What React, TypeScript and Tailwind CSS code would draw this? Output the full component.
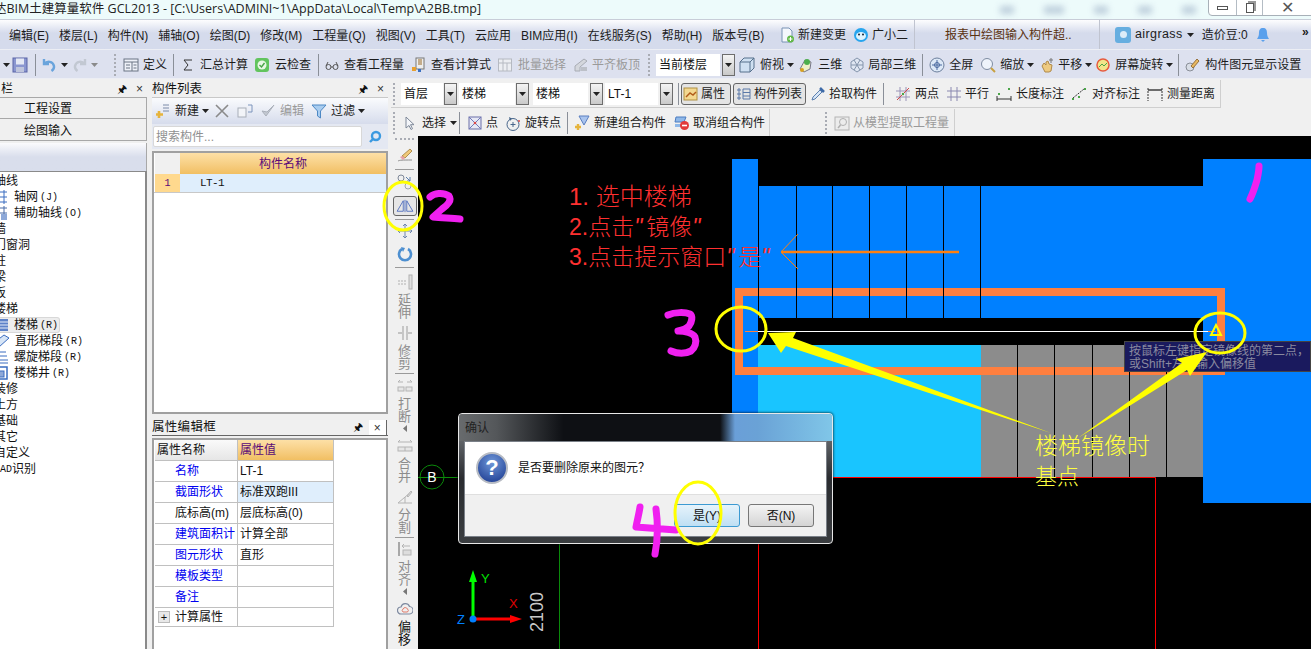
import type { ReactNode } from "react";

const Ic = ({ children, className = "" }: { children: ReactNode; className?: string }) => (
  <svg viewBox="0 0 16 16" className={`w-4 h-4 shrink-0 ${className}`} fill="none">
    {children}
  </svg>
);

const Caret = ({ className = "" }: { className?: string }) => (
  <svg viewBox="0 0 7 4" className={`w-[7px] h-1 shrink-0 ${className}`}>
    <path d="M0 0h7L3.5 4z" fill="#222" />
  </svg>
);

const Sep = ({ className = "" }: { className?: string }) => (
  <div className={`w-px h-[22px] bg-[#8a8f98] shrink-0 ${className}`} />
);

const Grip = ({ className = "" }: { className?: string }) => (
  <div className={`w-[2px] h-[22px] shrink-0 border-l-2 border-dotted border-[#a9acb4] ${className}`} />
);

const T = ({
  icon,
  label,
  className = "",
  gray = false,
}: {
  icon?: ReactNode;
  label: string;
  className?: string;
  gray?: boolean;
}) => (
  <div className={`flex items-center shrink-0 whitespace-nowrap ${gray ? "text-[#9a9a9a]" : "text-[#1c1c1c]"} ${className}`}>
    {icon}
    <span>{label}</span>
  </div>
);

const Dropdown = ({ className = "" }: { className?: string }) => (
  <div className={`w-[13px] h-[22px] shrink-0 flex items-center justify-center border border-[#6d6d6d] bg-gradient-to-b from-[#f4f4f4] to-[#c9c9c9] ${className}`}>
    <Caret />
  </div>
);

const Select = ({ label, className = "" }: { label: string; className?: string }) => (
  <div className={`h-[22px] shrink-0 bg-white pl-[3px] flex items-center text-[#111] ${className}`}>{label}</div>
);

// toolbar icons
const Save = () => (
  <Ic>
    <rect x="1" y="1" width="14" height="14" fill="#8a96d0" stroke="#5a64a6" />
    <rect x="4" y="1.500" width="8" height="6" fill="#e4e8f4" />
    <rect x="4" y="10" width="8" height="5" fill="#bfc5dc" />
  </Ic>
);
const Undo = ({ c = "#6aa4dc" }: { c?: string }) => (
  <Ic>
    <path d="M3 2v5h5M3.500 7C6 3.500 12 4 13 9c.3 2-1 4-2.500 5" stroke={c} strokeWidth="2.400" />
  </Ic>
);
const Redo = () => (
  <Ic>
    <path d="M13 2v5H8M12.500 7C10 3.500 4 4 3 9c-.3 2 1 4 2.500 5" stroke="#c2c8d2" strokeWidth="2.400" />
  </Ic>
);
const Define = () => (
  <Ic>
    <rect x="1" y="2" width="14" height="12" fill="#eef1f8" stroke="#6b7484" />
    <path d="M1 5h14M9 5v9M3 8h4M3 11h4M10.500 8h3M10.500 11h3" stroke="#6b7484" />
  </Ic>
);
const GreenCheck = () => (
  <Ic>
    <rect x="1" y="1" width="14" height="14" rx="3" fill="#62c45e" />
    <circle cx="8" cy="8" r="4.500" fill="#e9f8e6" />
    <path d="M5.500 8l2 2 3-4" stroke="#4aa548" strokeWidth="1.400" />
  </Ic>
);
const Glasses = () => (
  <Ic>
    <circle cx="4.500" cy="10" r="2.500" stroke="#555" />
    <circle cx="11.500" cy="10" r="2.500" stroke="#555" />
    <path d="M7 10h2M2 9l2-4M14 9l-2-4" stroke="#555" />
  </Ic>
);
const Calc = () => (
  <Ic>
    <rect x="5" y="1" width="8" height="11" fill="#eee" stroke="#777" />
    <path d="M7 3h4M7 5h4M7 7h4" stroke="#9a6a28" />
    <rect x="1" y="10" width="4" height="4" fill="#e8a030" />
    <rect x="7" y="12" width="3" height="3" fill="#3a70c0" />
  </Ic>
);
const GrayDoc = () => (
  <Ic>
    <rect x="1.500" y="2" width="13" height="12" fill="#eceef2" stroke="#b6bac2" />
    <path d="M1.500 6h13M6 2v12M10 6v8" stroke="#b6bac2" />
  </Ic>
);
const GrayBar = () => (
  <Ic>
    <path d="M2 14V9l9-7 3 2-7 6v4z" fill="#d4d7dd" stroke="#a8acb4" />
    <rect x="8" y="10" width="6" height="4" fill="#bcc0c8" />
  </Ic>
);
const Box3d = () => (
  <Ic>
    <path d="M1 5l4-4h10v10l-4 4H1z" fill="#cfe0f2" stroke="#56708c" />
    <path d="M1 5h10v10M11 5l4-4" stroke="#56708c" />
  </Ic>
);
const Globe3d = () => (
  <Ic>
    <path d="M2 12l5-9 6 2-1 7-6 3z" fill="#eef0c8" stroke="#778" />
    <circle cx="9" cy="5" r="3" fill="#4cae4c" />
    <circle cx="4" cy="13" r="2" fill="#d8a020" />
  </Ic>
);
const Cube = () => (
  <Ic>
    <path d="M8 1l6 4v6l-6 4-6-4V5z" fill="#dfe6f2" stroke="#8595ac" />
    <path d="M5 3l6 10M11 3L5 13M2 8h12" stroke="#8595ac" />
  </Ic>
);
const Target = () => (
  <Ic>
    <circle cx="8" cy="8" r="7" fill="#dce8f6" stroke="#6c7f9c" />
    <path d="M8 3v10M3 8h10" stroke="#4b6aa0" />
    <circle cx="8" cy="8" r="2.500" stroke="#4b6aa0" />
  </Ic>
);
const Magnifier = () => (
  <Ic>
    <circle cx="7" cy="7" r="5.500" fill="#eef3fb" stroke="#7e8ca2" />
    <path d="M11 11l4 4" stroke="#c8a040" strokeWidth="2" />
  </Ic>
);
const Hand = () => (
  <Ic>
    <path d="M3 9l2-3 2 2V5l2-1 1 3 3 1-1 6-2 1H6z" fill="#eeca80" stroke="#b08a4a" />
    <path d="M12 1v5M10 3h4" stroke="#777" />
  </Ic>
);
const Rotate = () => (
  <Ic>
    <path d="M3 3h10v10H3z" fill="#f2e58a" />
    <circle cx="8" cy="8" r="6" stroke="#e85a3a" strokeWidth="1.500" />
    <path d="M4 10l3-3 2 2 3-3" stroke="#4aa548" />
  </Ic>
);
const Paint = () => (
  <Ic>
    <circle cx="5" cy="10" r="4" fill="#d8dde6" stroke="#8a8f98" />
    <path d="M6 9l6-7 2 2-6 7z" fill="#e8b860" stroke="#96703a" />
  </Ic>
);
const NewDoc = () => (
  <Ic>
    <path d="M3 1h7l3 3v11H3z" fill="#f4f7fc" stroke="#7892b4" />
    <circle cx="11.500" cy="12" r="3.500" fill="#62b848" />
    <path d="M11.500 10v4M9.500 12h4" stroke="#fff" />
  </Ic>
);
const Mascot = () => (
  <Ic>
    <circle cx="8" cy="8" r="7" fill="#27a5ee" />
    <ellipse cx="8" cy="9" rx="5" ry="4" fill="#dff4ff" />
    <circle cx="6" cy="7.500" r="1" fill="#123" />
    <circle cx="10" cy="7.500" r="1" fill="#123" />
  </Ic>
);
const Plus = () => (
  <Ic>
    <path d="M8 2h6M8 5h6M8 8h6" stroke="#7a8aa8" />
    <path d="M4 8v7M1 11.500h7" stroke="#e6b43c" strokeWidth="2.600" />
  </Ic>
);
const GrayCheck = () => (
  <Ic>
    <path d="M2 8l4 5 8-11-7 7z" fill="#c4c9d2" stroke="#aab0ba" />
  </Ic>
);
const Filter = () => (
  <Ic>
    <path d="M1 2h14L9.500 8v7l-3-2V8z" fill="#a9cdf0" stroke="#4d88c4" />
  </Ic>
);
const Copy = () => (
  <Ic>
    <rect x="1" y="5" width="8" height="9" fill="#f2f4f8" stroke="#a8aeb8" />
    <path d="M11 2h4v7h-4" stroke="#7d94bc" />
  </Ic>
);
const Dropper = () => (
  <Ic>
    <path d="M2 14l1-3 7-7 2 2-7 7z" fill="#d7e5f6" stroke="#5b7fae" />
    <path d="M10 2l4 4" stroke="#3d6aa8" strokeWidth="2.500" />
  </Ic>
);
const TwoPoint = () => (
  <Ic>
    <path d="M5 1v14M11 1v14M1 5h14M1 11h14" stroke="#9a94b8" />
    <path d="M2 14L14 2" stroke="#d04848" />
    <circle cx="8" cy="8" r="1.200" fill="#4aa548" />
  </Ic>
);
const Parallel = () => (
  <Ic>
    <path d="M5 1v14M11 1v14M1 5h14M1 11h14" stroke="#8a88b0" />
  </Ic>
);
const LengthDim = () => (
  <Ic>
    <path d="M1 10v5M15 10v5M1 13h14" stroke="#333" />
    <rect x="12" y="2" width="2" height="2" fill="#4aa548" />
    <rect x="2" y="7" width="2" height="2" fill="#4aa548" />
  </Ic>
);
const AlignDim = () => (
  <Ic>
    <path d="M2 12L13 3" stroke="#333" strokeDasharray="2 1" />
    <rect x="1" y="12" width="2" height="2" fill="#4aa548" />
    <rect x="7" y="10" width="2" height="2" fill="#4aa548" />
    <rect x="13" y="2" width="2" height="2" fill="#4aa548" />
  </Ic>
);
const Measure = () => (
  <Ic>
    <path d="M1 2v13M15 2v13" stroke="#333" strokeDasharray="2 1" />
    <path d="M1 4h14" stroke="#333" strokeWidth="1.400" />
  </Ic>
);
const Cursor = () => (
  <Ic>
    <path d="M5 2v11l3-2.500 2 4 1.500-.8-2-4h3.500z" fill="#f4f6fa" stroke="#7e8898" />
  </Ic>
);
const PointX = () => (
  <Ic>
    <rect x="2" y="2" width="12" height="12" fill="#e6e8f4" stroke="#6a6ea8" />
    <path d="M2 2l12 12M14 2L2 14" stroke="#7078b8" />
    <circle cx="8" cy="8" r="1.300" fill="#d84848" />
  </Ic>
);
const RotatePt = () => (
  <Ic>
    <circle cx="8" cy="9.500" r="6" stroke="#47658a" />
    <path d="M8 7v5M5.500 9.500h5" stroke="#47658a" />
    <path d="M4 2l3 1.500-2 2.500z" fill="#47658a" />
    <circle cx="14" cy="6" r="1" fill="#d84848" />
  </Ic>
);
const ComboNew = () => (
  <Ic>
    <path d="M5 1h10l-5 9z" fill="#a9c4ee" stroke="#5b7fc0" />
    <path d="M4 9v6M1 12h6" stroke="#e6b43c" strokeWidth="2.400" />
  </Ic>
);
const ComboCancel = () => (
  <Ic>
    <path d="M2 2h10l-2 5H1z" fill="#8fb8e8" stroke="#4d7cc0" />
    <rect x="1" y="9" width="7" height="3" fill="#8fb8e8" />
    <circle cx="10.500" cy="10.500" r="4.500" fill="#e23a3a" />
    <path d="M8 10.500h5" stroke="#fff" strokeWidth="1.600" />
  </Ic>
);
const ModelPick = () => (
  <Ic>
    <rect x="1" y="2" width="14" height="13" fill="#ececec" stroke="#b4b4b4" />
    <circle cx="9" cy="7" r="3.500" stroke="#b0b0b0" />
    <path d="M6.500 10L4 13" stroke="#b0b0b0" strokeWidth="1.500" />
  </Ic>
);
const PropIcon = () => (
  <Ic>
    <rect x="1" y="2" width="13" height="12" fill="#f3d890" stroke="#b09040" />
    <path d="M3 11l4-4 3 2 3-3" stroke="#b05a18" strokeWidth="1.400" />
  </Ic>
);
const ListIcon = () => (
  <Ic>
    <path d="M2 3h2v2H2zM2 7h2v2H2zM2 11h2v2H2z" stroke="#5b79a8" />
    <path d="M7 3h7v10H7zM7 6.500h7M7 10h7" stroke="#5b79a8" />
  </Ic>
);

// vertical strip
const VText = ({ a, b, dark = false }: { a: string; b: string; dark?: boolean }) => (
  <div className={`flex flex-col items-center text-[13px] leading-[13px] ${dark ? "text-[#111]" : "text-[#8c8c8c]"}`}>
    <span>{a}</span>
    <span>{b}</span>
  </div>
);
const VSep = ({ className = "" }: { className?: string }) => (
  <div className={`w-[19px] h-px bg-[#9a9a9a] shrink-0 ${className}`} />
);
const VTiny = ({ className = "" }: { className?: string }) => (
  <svg viewBox="0 0 4 7" className={`w-1 h-[7px] shrink-0 ${className}`}>
    <path d="M4 0v7L0 3.500z" fill="#777" />
  </svg>
);

const VerticalStrip = () => (
  <div className="w-[27px] h-full shrink-0 flex flex-col items-center bg-[#f0f0f0] overflow-hidden">
    <div className="w-[19px] h-[2px] mt-[2px] shrink-0 border-t-2 border-dotted border-[#a9acb4]" />
    <Ic className="mt-[7px]">
      <path d="M1 14c2-1 4-1 14-1" stroke="#8e8e8e" />
      <path d="M5 9l8-7 2 2-7 7z" fill="#f0c878" stroke="#b09050" />
      <path d="M3 10l2-1 3 2-2 2z" fill="#e8a0a8" />
    </Ic>
    <VSep className="mt-[6px]" />
    <Ic className="mt-[4px]">
      <circle cx="4" cy="4" r="3" stroke="#7e8898" />
      <circle cx="11" cy="12" r="3" stroke="#9ca4b0" />
      <path d="M9 3l4 4M13 3v4h-3" stroke="#5b7fae" />
    </Ic>
    <div className="mt-[6px] w-[24px] h-[20px] shrink-0 rounded-[3px] border border-[#666] bg-[#e6e6e6] flex items-center justify-center">
      <svg viewBox="0 0 20 16" className="w-[18px] h-[14px]" fill="none">
        <path d="M8 2v12H1zM12 2v12h7zM10 1v14" stroke="#3a5cb8" strokeWidth=".9" />
      </svg>
    </div>
    <VSep className="mt-[3px]" />
    <Ic className="mt-[3px]">
      <path d="M8 1v14M1 8h14M6 3l2-2 2 2M6 13l2 2 2-2M3 6L1 8l2 2M13 6l2 2-2 2" stroke="#6f86ad" />
    </Ic>
    <Ic className="mt-[7px]">
      <path d="M11 3a6 6 0 1 1-6 0" stroke="#4d8fd0" strokeWidth="2.600" />
      <path d="M4 1l4 1-2 4z" fill="#4d8fd0" />
    </Ic>
    <VSep className="mt-[5px]" />
    <Ic className="mt-[6px]">
      <path d="M1 7h9M1 10h9" stroke="#b0b0b0" strokeDasharray="2 1" />
      <rect x="12" y="1" width="3" height="14" fill="#e0e0e0" stroke="#b0b0b0" />
    </Ic>
    <div className="mt-[3px]">
      <VText a="延" b="伸" />
    </div>
    <Ic className="mt-[6px]">
      <path d="M6 1v14M10 1v14M1 8h4M11 8h4" stroke="#b4b4b4" strokeWidth="1.400" />
    </Ic>
    <div className="mt-[3px]">
      <VText a="修" b="剪" />
    </div>
    <VSep className="mt-[3px]" />
    <Ic className="mt-[4px]">
      <path d="M1 4h5M10 4h5M1 4l2-2M15 4l-2-2" stroke="#b4b4b4" />
      <rect x="1" y="9" width="6" height="4" fill="#e6e6e6" stroke="#b4b4b4" />
      <rect x="9" y="9" width="6" height="4" fill="#e6e6e6" stroke="#b4b4b4" />
    </Ic>
    <div className="mt-[3px]">
      <VText a="打" b="断" />
    </div>
    <VTiny className="mt-[2px]" />
    <Ic className="mt-[6px]">
      <path d="M1 4h14M1 4l2-2M15 4l-2-2" stroke="#b4b4b4" />
      <rect x="1" y="9" width="14" height="4" fill="#e6e6e6" stroke="#b4b4b4" />
      <path d="M8 9v4" stroke="#b4b4b4" />
    </Ic>
    <div className="mt-[3px]">
      <VText a="合" b="并" />
    </div>
    <Ic className="mt-[6px]">
      <path d="M1 14L14 3M1 14h14M8 8v6" stroke="#b4b4b4" />
      <path d="M10 7l4-5 1 1-4 5z" fill="#ddd" stroke="#b4b4b4" />
    </Ic>
    <div className="mt-[3px]">
      <VText a="分" b="割" />
    </div>
    <VSep className="mt-[3px]" />
    <Ic className="mt-[3px]">
      <path d="M2 1v14" stroke="#a8a8a8" strokeWidth="2" />
      <rect x="6" y="9" width="8" height="5" fill="#ddd" stroke="#b4b4b4" />
      <path d="M5 5h8M5 5l2-2M5 5l2 2" stroke="#b4b4b4" />
    </Ic>
    <div className="mt-[3px]">
      <VText a="对" b="齐" />
    </div>
    <VTiny className="mt-[2px]" />
    <Ic className="mt-[6px]">
      <path d="M4 13a3.500 3.500 0 0 1 0-7 4.500 4.500 0 0 1 8.500-.5A3.700 3.700 0 0 1 12 13z" stroke="#7e8aa0" strokeWidth="1.200" />
      <path d="M6 11a2 2 0 0 1 0-3 2.500 2.500 0 0 1 4.500 0 2 2 0 0 1 0 3z" stroke="#e07a6a" />
    </Ic>
    <div className="mt-[3px]">
      <VText a="偏" b="移" dark />
    </div>
  </div>
);

const Paren = ({ children }: { children: ReactNode }) => (
  <span className="font-['Liberation_Mono',monospace] text-[10px] ml-[2px]">{children}</span>
);

const TreeRow = ({ children, className = "" }: { children: ReactNode; className?: string }) => (
  <div className={`h-4 flex items-center whitespace-nowrap text-[12px] text-[#111] ${className}`}>{children}</div>
);

const LeftNav = () => (
  <div className="w-[147px] h-full shrink-0 flex flex-col">
    <div className="h-[17px] flex items-center text-[12px] text-[#111] pl-[1px] pr-[4px] pt-[1px]">
      <span>栏</span>
      <span className="ml-auto text-[11px]">🖈</span>
      <span className="ml-[9px] text-[12px] leading-none text-[#333]">×</span>
    </div>
    <div className="h-[22px] border-y border-r border-[#a8a8a8] bg-[#f0f0f0] flex items-center pl-[24px] pt-[2px] text-[12px] text-[#111]">工程设置</div>
    <div className="h-[22px] border-b border-r border-[#a8a8a8] bg-[#f0f0f0] flex items-center pl-[24px] pt-[2px] text-[12px] text-[#111]">绘图输入</div>
    <div className="h-[28px] mt-[2px] border-r border-[#a8a8a8] bg-gradient-to-b from-[#fbfbfd] via-[#d9deec] to-[#d9deec]" />
    <div className="flex-1 bg-white border-t border-r-2 border-[#8a8a8a] pt-[1px] overflow-hidden">
      <TreeRow className="-ml-[6px]">轴线</TreeRow>
      <TreeRow>
        <Ic className="-ml-[7px] mr-[5px]">
          <path d="M2 3h12M2 8h12M2 13h12M5 1v14M11 1v14" stroke="#3a6cc0" />
        </Ic>
        轴网<Paren>(J)</Paren>
      </TreeRow>
      <TreeRow>
        <Ic className="-ml-[7px] mr-[5px]">
          <path d="M2 3h12M2 8h12M5 1v14M11 1v14" stroke="#4a6ca8" />
          <rect x="8" y="9" width="6" height="6" fill="#8da8d8" />
        </Ic>
        辅助轴线<Paren>(O)</Paren>
      </TreeRow>
      <TreeRow className="-ml-[6px]">墙</TreeRow>
      <TreeRow className="-ml-[6px]">门窗洞</TreeRow>
      <TreeRow className="-ml-[6px]">柱</TreeRow>
      <TreeRow className="-ml-[6px]">梁</TreeRow>
      <TreeRow className="-ml-[6px]">板</TreeRow>
      <TreeRow className="-ml-[6px]">楼梯</TreeRow>
      <TreeRow>
        <div className="h-4 flex items-center w-[60px] rounded-r-[3px] bg-[#ededed] border-y border-r border-[#d8d8d8]">
          <Ic className="-ml-[7px] mr-[5px]">
            <rect x="1" y="2" width="14" height="12" fill="#5d82c8" />
            <path d="M1 5h14M1 8h14M1 11h14" stroke="#e8eefa" />
          </Ic>
          楼梯<Paren>(R)</Paren>
        </div>
      </TreeRow>
      <TreeRow>
        <Ic className="-ml-[6px] mr-[5px]">
          <path d="M1 9l9-7 5 3-10 9z" fill="#d7e5f6" stroke="#3a6cc0" />
        </Ic>
        直形梯段<Paren>(R)</Paren>
      </TreeRow>
      <TreeRow>
        <Ic className="-ml-[7px] mr-[5px]">
          <path d="M3 3h10M1 7h13M3 11h12M1 14h14" stroke="#3a6cc0" />
        </Ic>
        螺旋梯段<Paren>(R)</Paren>
      </TreeRow>
      <TreeRow>
        <Ic className="-ml-[7px] mr-[5px]">
          <rect x="1" y="2" width="13" height="12" stroke="#3a6cc0" strokeWidth="1.500" />
          <rect x="5" y="6" width="6" height="6" fill="#8da8d8" stroke="#3a6cc0" />
        </Ic>
        楼梯井<Paren>(R)</Paren>
      </TreeRow>
      <TreeRow className="-ml-[6px]">装修</TreeRow>
      <TreeRow className="-ml-[6px]">土方</TreeRow>
      <TreeRow className="-ml-[6px]">基础</TreeRow>
      <TreeRow className="-ml-[6px]">其它</TreeRow>
      <TreeRow className="-ml-[6px]">自定义</TreeRow>
      <TreeRow>
        <span className="font-['Liberation_Mono',monospace] text-[10px]">AD</span>识别
      </TreeRow>
    </div>
  </div>
);

const ListPanel = () => (
  <div className="w-[236px] h-[334px] shrink-0 flex flex-col">
    <div className="h-[17px] flex items-center text-[12.500px] text-[#111] pr-[4px] pt-[1px]">
      <span>构件列表</span>
      <span className="ml-auto text-[11px]">🖈</span>
      <span className="ml-[9px] text-[12px] leading-none text-[#333]">×</span>
    </div>
    <div className="h-[27px] bg-gradient-to-b from-[#fafbfd] to-[#d6dcec] flex items-center text-[12px] border-t border-[#c8c8c8]">
      <T className="ml-[3px] gap-1" icon={<Plus />} label="新建" />
      <Caret className="ml-[3px]" />
      <svg viewBox="0 0 14 14" className="ml-[6px] w-[14px] h-[14px]" fill="none">
        <path d="M1 1l12 12M13 1L1 13" stroke="#8a8a8a" strokeWidth="1.600" />
      </svg>
      <div className="ml-[8px]">
        <Copy />
      </div>
      <T className="ml-[7px] gap-1" icon={<GrayCheck />} label="编辑" gray />
      <T className="ml-[7px] gap-1" icon={<Filter />} label="过滤" />
      <Caret className="ml-[3px]" />
    </div>
    <div className="h-[25px] bg-[#e4e8f2] flex items-center">
      <div className="w-[209px] h-[21px] ml-[1px] bg-white border border-[#d8d8d8] rounded-[2px] text-[12px] text-[#909090] flex items-center pl-[2px]">搜索构件...</div>
      <svg viewBox="0 0 14 14" className="ml-[6px] w-[14px] h-[14px]" fill="none">
        <circle cx="8" cy="6" r="4" stroke="#3c9ae0" strokeWidth="2.400" />
        <path d="M5 9l-3 3" stroke="#3c9ae0" strokeWidth="2.400" />
      </svg>
    </div>
    <div className="flex-1 mt-[2px] border-2 border-[#a0a0a0] bg-white text-[12px]">
      <div className="h-[21px] flex">
        <div className="w-[25px] ml-[1px] bg-[#f0f0f0]" />
        <div className="flex-1 bg-gradient-to-b from-[#fde0a6] to-[#f1bf62] flex items-center justify-center text-[#5a0a78]">构件名称</div>
      </div>
      <div className="h-[19px] flex border-b border-[#c8c8c8]">
        <div className="w-[25px] ml-[1px] bg-[#ffd98e] flex items-center justify-center text-[#5a0a78] font-['Liberation_Mono',monospace] text-[10px]">1</div>
        <div className="flex-1 bg-[#dfeefc] pl-[20px] flex items-center font-['Liberation_Mono',monospace] text-[11px] tracking-[-0.6px] text-[#111]">LT-1</div>
      </div>
    </div>
  </div>
);

const rows: { name: string; value: string; blue?: boolean; hi?: boolean }[] = [
  { name: "名称", value: "LT-1", blue: true },
  { name: "截面形状", value: "标准双跑III", blue: true, hi: true },
  { name: "底标高(m)", value: "层底标高(0)" },
  { name: "建筑面积计", value: "计算全部", blue: true },
  { name: "图元形状", value: "直形", blue: true },
  { name: "模板类型", value: "", blue: true },
  { name: "备注", value: "", blue: true },
];

const PropPanel = () => (
  <div className="w-[236px] flex-1 mt-[6px] flex flex-col">
    <div className="h-[16px] flex items-center text-[12.500px] tracking-[0.3px] text-[#111] border-b border-[#666] pr-[1px] bg-[#f0f0f0]">
      <span>属性编辑框</span>
      <span className="ml-auto text-[11px]">🖈</span>
      <div className="ml-[6px] w-[18px] h-[15px] flex items-center justify-center text-[12px] leading-none text-[#333] bg-white border-r border-[#666]">×</div>
    </div>
    <div className="flex-1 mt-[2px] border-x-2 border-t-2 border-[#a0a0a0] bg-white text-[12px] text-[#111]">
      <div className="w-[179px] ml-[1px] flex h-[21px] border-b border-[#c0c0c0]">
        <div className="w-[83px] bg-gradient-to-b from-[#fafafa] to-[#e6e6e6] flex items-center pl-[2px] border-r border-[#c0c0c0]">属性名称</div>
        <div className="flex-1 bg-gradient-to-b from-[#fde0a6] to-[#f1bf62] flex items-center pl-[2px] text-[#5a0a78] border-r border-[#c0c0c0]">属性值</div>
      </div>
      {rows.map((r) => (
        <div key={r.name} className="w-[179px] ml-[1px] flex h-[21px] border-b border-[#c0c0c0]">
          <div className={`w-[83px] flex items-center pl-[20px] whitespace-nowrap border-r border-[#c0c0c0] ${r.blue ? "text-[#0000f0]" : ""}`}>{r.name}</div>
          <div className={`flex-1 flex items-center pl-[2px] whitespace-nowrap border-r border-[#c0c0c0] ${r.hi ? "bg-[#dfeefc]" : ""}`}>{r.value}</div>
        </div>
      ))}
      <div className="w-[179px] ml-[1px] flex h-[19px] border-b border-[#c0c0c0]">
        <div className="w-[83px] flex items-center pl-[3px] whitespace-nowrap border-r border-[#c0c0c0]">
          <div className="w-3 h-3 bg-[#e8e8e8] border border-[#bbb] flex items-center justify-center text-[11px] leading-none">+</div>
          <span className="ml-[5px]">计算属性</span>
        </div>
        <div className="flex-1 border-r border-[#c0c0c0]" />
      </div>
    </div>
  </div>
);

const Dialog = () => (
  <div className="absolute left-[458px] top-[413px] w-[375px] h-[131px] rounded-[4px] border border-[#e8e8e8] overflow-hidden shadow-[0_0_3px_#000] flex flex-col text-[12px] bg-gradient-to-b from-[#8b9094] via-[#2a2c30] to-[#3a3d40] px-[5px] pb-[6px]">
    <div className="-mx-[5px] h-[27px] shrink-0 flex items-center pl-[6px] text-[#222] bg-[linear-gradient(90deg,#686b6d_0%,#54575a_10%,#0e1014_28%,#0e1014_70%,#6a9fd8_74%,#6aa2d6_80%,#80c6e8_100%)]">
      确认
    </div>
    <div className="flex-1 flex flex-col bg-white border border-[#7a8088]">
      <div className="h-[52px] flex items-center pl-[11px]">
        <div className="w-8 h-8 rounded-full border-2 border-[#b8bcc4] bg-[radial-gradient(circle_at_50%_30%,#6f97d8,#17358c)] flex items-center justify-center text-white font-bold text-[22px] leading-none">
          ?
        </div>
        <span className="ml-[10px] -mt-[3px] text-[#111] font-['Noto_Sans_CJK_SC',sans-serif]">是否要删除原来的图元？</span>
      </div>
      <div className="flex-1 bg-[#f0f0f0] border-t border-[#dfdfdf] flex items-start justify-end pt-[9px] pr-[12px] gap-[8px] text-[#111]">
        <div className="w-[66px] h-[23px] rounded-[3px] border border-[#3c9ad2] bg-gradient-to-b from-[#e6f3fb] to-[#bfdff3] flex items-center justify-center">是(Y)</div>
        <div className="w-[66px] h-[23px] rounded-[3px] border border-[#777] bg-gradient-to-b from-[#f4f4f4] to-[#d4d4d4] flex items-center justify-center">否(N)</div>
      </div>
    </div>
  </div>
);

const Canvas = () => (
  <div className="relative flex-1 h-full bg-black overflow-hidden">
    {/* coordinates inside the drawing, origin at 418,136 */}
    <div className="absolute left-[314px] top-[23px] w-[26px] h-[318px] bg-[#0080ff]" />
    <div className="absolute left-[340px] top-[50px] w-[445px] h-[132px] bg-[#0080ff]" />
    <div className="absolute left-[785px] top-[23px] w-[108px] h-[344px] bg-[#0080ff]" />
    <div className="absolute left-[340px] top-[209px] w-[223px] h-[132px] bg-[#19c5ff]" />
    <div className="absolute left-[563px] top-[209px] w-[222px] h-[132px] bg-[#8c8c8c]" />
    <div className="absolute left-[340px] top-[182px] w-[445px] h-[27px] bg-black" />
    <svg className="absolute inset-0 w-[893px] h-[513px]" viewBox="0 0 893 513" fill="none">
      <rect x="321" y="156" width="482" height="79" stroke="#ff7f3f" strokeWidth="8" />
      <path d="M340.500 50v132M378.500 50v132M414.500 50v132M451.500 50v132M488.500 50v132M525.500 50v132M562.500 50v132" stroke="#000" />
      <path d="M599.500 209v132M636.500 209v132M674.500 209v132M711.500 209v132M748.500 209v132" stroke="#000" />
      <path d="M340 195.500h450" stroke="#fff" />
      <path d="M327 195.500h13M790 195.500h8" stroke="#ff7f3f" />
      <path d="M414 341.500h323.500V513" stroke="#f00" />
      <path d="M340.500 405v108" stroke="#f00" />
      <path d="M141.500 405v108" stroke="#0a8a0a" />
      <path d="M0 341.500h40" stroke="#0a8a0a" />
      <circle cx="14" cy="341" r="12" stroke="#0a8a0a" />
      <text x="14" y="346" fill="#fff" textAnchor="middle" fontSize="14" fontFamily="Liberation Sans">B</text>
      <path d="M55 483V440" stroke="#00ff00" strokeWidth="3" />
      <path d="M55 434l-4 12h8z" fill="#00ff00" />
      <path d="M55 483h38" stroke="#ff0000" strokeWidth="3" />
      <path d="M104 483l-12-4v8z" fill="#ff0000" />
      <circle cx="55" cy="483" r="3.500" fill="#0080ff" />
      <text x="63" y="447" fill="#00e000" fontSize="13" fontFamily="Liberation Sans" fontWeight="300">Y</text>
      <text x="91" y="472" fill="#e00000" fontSize="13" fontFamily="Liberation Sans">X</text>
      <text x="39" y="488" fill="#0080ff" fontSize="13" fontFamily="Liberation Sans">Z</text>
      <text transform="translate(125 496) rotate(-90)" fill="#c8c8c8" fontSize="18" fontFamily="Liberation Sans">2100</text>
    </svg>
    <div className="absolute left-[706px] top-[205px] w-[187px] h-[31px] bg-[#1a1a5e] border border-[#444] text-[12px] leading-[13px] text-[#8a8aa0] pl-[4px] pt-[3px] whitespace-nowrap">
      <div>按鼠标左键指定镜像线的第二点，</div>
      <div>或Shift+左键输入偏移值</div>
    </div>
  </div>
);

const Q = () => <span className="tracking-[4px] italic">"</span>;

const Overlay = () => (
  <>
    <svg className="absolute inset-0 w-[1311px] h-[649px] pointer-events-none" viewBox="0 0 1311 649" fill="none">
      <ellipse cx="403" cy="206" rx="19" ry="24" stroke="#ffff00" strokeWidth="3" />
      <ellipse cx="741" cy="329" rx="25" ry="22" stroke="#ffff00" strokeWidth="3" />
      <ellipse cx="1220" cy="333" rx="25" ry="20" stroke="#ffff00" strokeWidth="3" />
      <path d="M1216 325l5 10h-10z" stroke="#ffff00" strokeWidth="2" />
      <path d="M781 252h178" stroke="#ff8010" strokeWidth="2.500" />
      <path d="M798 234l-17 18 17 17" stroke="#ff8010" />
      <path d="M768 333l28-1-3 6 258 95-265-87-5 7z" fill="#ffff00" />
      <path d="M1207 352l-17 24-3-6-109 68 104-75-6-4z" fill="#ffff00" />
      <g stroke="#f020f0" strokeWidth="7" strokeLinecap="round" strokeLinejoin="round">
        <path d="M430 197c4-4 13-5 19-1 3 4-1 9-7 13l-9 8c9 1 18 1 27 2" />
        <path d="M1259 166c0 5-1 9-2 14-2 7-4 13-7 19" />
        <path d="M668 315c7-3 17-3 22-1 3 2 2 8-1 12-3 3-6 4-11 5 7 0 15 2 17 6 2 5 0 11-4 14-6 3-13 3-20 0" />
        <path d="M640 507c-1 7-3 14-4 20 13 1 27 2 40 3M656 509c2 15 2 30-1 45" />
      </g>
      <ellipse cx="698" cy="513" rx="23" ry="31" stroke="#ffff00" strokeWidth="3" />
    </svg>
    <div className="absolute left-[569px] top-[183px] text-[24px] leading-[28px] font-light text-[#ff3030] whitespace-nowrap">1. 选中楼梯</div>
    <div className="absolute left-[569px] top-[213px] text-[23px] leading-[28px] font-light text-[#ff3030] whitespace-nowrap">
      2.点击<Q />镜像<Q />
    </div>
    <div className="absolute left-[569px] top-[243px] text-[23px] leading-[28px] font-light text-[#ff3030] whitespace-nowrap">
      3.点击提示窗口<Q />是<Q />
    </div>
    <div className="absolute left-[1035px] top-[431px] text-[23px] leading-[30px] font-light text-[#ffff40] whitespace-nowrap">楼梯镜像时</div>
    <div className="absolute left-[1035px] top-[462px] text-[22px] leading-[30px] font-light text-[#ffff40] whitespace-nowrap">基点</div>
  </>
);

export default function App() {
  return (
    <div className="relative w-[1311px] h-[649px] overflow-hidden bg-[#f0f0f0] font-['Liberation_Sans','Noto_Sans_CJK_SC',sans-serif] text-[12px]">
      {/* Title bar */}
      <div className="relative h-[20px] bg-[#edfbfb] border-b border-[#c8cdd8] flex items-center whitespace-nowrap text-[12.500px] text-[#222]">
        <span className="-ml-[6px] font-['Open_Sans','Noto_Sans_CJK_SC',sans-serif]">达BIM土建算量软件 GCL2013 - [C:\Users\ADMINI~1\AppData\Local\Temp\A2BB.tmp]</span>
        <div className="absolute right-[10px] top-0 flex items-center gap-[30px] blur-[3px] opacity-40 pr-[105px] pt-[6px]">
          <div className="w-[14px] h-[8px] bg-[#7a90b0]" />
          <div className="w-[20px] h-[8px] bg-[#7a90b0]" />
          <div className="w-[14px] h-[8px] bg-[#7a90b0]" />
          <div className="w-[14px] h-[8px] bg-[#7a90b0]" />
          <div className="w-[14px] h-[8px] bg-[#7a90b0]" />
        </div>
        <div className="absolute left-[1208px] -top-[1px] w-[104px] h-[17px] rounded-bl-[4px] bg-white border border-[#a8b0b8] flex">
          <div className="w-[28px] border-r border-[#b4bcc4] flex items-center justify-center">
            <div className="w-[11px] h-[4px] border border-[#555]" />
          </div>
          <div className="w-[26px] border-r border-[#b4bcc4] flex items-center justify-center">
            <div className="w-[8px] h-[10px] border border-[#555] bg-white shadow-[2px_-2px_0_#999]" />
          </div>
          <div className="flex-1 flex items-center justify-center text-[16px] leading-none text-[#555]">✕</div>
        </div>
      </div>

      {/* Menu bar */}
      <div className="relative h-[29px] pt-[1px] bg-gradient-to-b from-[#fdfdfe] from-[0%] via-[#d5dbec] via-[45%] to-[#d5dbec] flex items-center text-[#1c1c1c] whitespace-nowrap">
        <div className="flex items-center gap-[10px] pl-[9px] mt-[1px]">
          <span>编辑(E)</span>
          <span>楼层(L)</span>
          <span>构件(N)</span>
          <span>辅轴(O)</span>
          <span>绘图(D)</span>
          <span>修改(M)</span>
          <span>工程量(Q)</span>
          <span>视图(V)</span>
          <span>工具(T)</span>
          <span>云应用</span>
          <span>BIM应用(I)</span>
          <span>在线服务(S)</span>
          <span>帮助(H)</span>
          <span>版本号(B)</span>
        </div>
        <div className="absolute left-[779px] top-0 h-full flex items-center">
          <T className="gap-[3px]" icon={<NewDoc />} label="新建变更" />
          <T className="ml-[7px] gap-[3px]" icon={<Mascot />} label="广小二" />
        </div>
        <div className="absolute left-[914px] top-0 h-full w-[186px] border-x border-[#c0c4d0] pl-[30px] flex items-center text-[#5a3210]">报表中绘图输入构件超..</div>
        <div className="absolute left-[1115px] top-0 h-full flex items-center">
          <div className="w-4 h-4 rounded-[3px] bg-[#66aee0] flex items-center justify-center">
            <div className="w-[7px] h-[7px] rounded-full bg-[#dcecf8]" />
          </div>
          <span className="ml-[4px] text-[12.500px] tracking-[0.4px]">airgrass</span>
          <Caret className="ml-[4px]" />
          <span className="ml-[8px]">造价豆:0</span>
          <svg viewBox="0 0 14 16" className="ml-[8px] w-[14px] h-4">
            <path d="M7 1c3 0 4 2 4 5s1 4 2 6H1c1-2 2-3 2-6s1-5 4-5z" fill="#5aa0ec" />
            <path d="M5 13h4l-2 2z" fill="#5aa0ec" />
          </svg>
        </div>
        <span className="absolute left-[1302px] top-[6px] font-bold text-[12px] leading-[12px]">»</span>
      </div>

      {/* Main toolbar */}
      <div className="h-[30px] pt-[2px] bg-[#dde1ef] border-y border-[#eceef4] flex items-center whitespace-nowrap">
        <Caret className="ml-[3px]" />
        <div className="ml-[2px]">
          <Save />
        </div>
        <Sep className="ml-[7px]" />
        <div className="ml-[5px]">
          <Undo />
        </div>
        <Caret className="ml-[4px]" />
        <div className="ml-[4px]">
          <Redo />
        </div>
        <svg viewBox="0 0 7 4" className="ml-[3px] w-[7px] h-1">
          <path d="M0 0h7L3.500 4z" fill="#8a8a8a" />
        </svg>
        <Grip className="ml-[16px]" />
        <T className="ml-[7px] gap-1" icon={<Define />} label="定义" />
        <Sep className="ml-[6px]" />
        <T className="ml-[6px] gap-1" icon={<Ic><path d="M12 3H4l4 5-4 5h8" stroke="#333" /></Ic>} label="汇总计算" />
        <T className="ml-[6px] gap-[5px]" icon={<GreenCheck />} label="云检查" />
        <Sep className="ml-[7px]" />
        <T className="ml-[5px] gap-1" icon={<Glasses />} label="查看工程量" />
        <T className="ml-[7px] gap-1" icon={<Calc />} label="查看计算式" />
        <T className="ml-[6px] gap-[5px]" icon={<GrayDoc />} label="批量选择" gray />
        <T className="ml-[7px] gap-[3px]" icon={<GrayBar />} label="平齐板顶" gray />
        <Grip className="ml-[8px]" />
        <Select className="ml-[6px] w-[64px]" label="当前楼层" />
        <Dropdown className="ml-[2px]" />
        <T className="ml-[4px] gap-[5px]" icon={<Box3d />} label="俯视" />
        <Caret className="ml-[3px]" />
        <T className="ml-[4px] gap-1" icon={<Globe3d />} label="三维" />
        <T className="ml-[7px] gap-[3px]" icon={<Cube />} label="局部三维" />
        <Sep className="ml-[6px]" />
        <T className="ml-[6px] gap-1" icon={<Target />} label="全屏" />
        <T className="ml-[7px] gap-1" icon={<Magnifier />} label="缩放" />
        <Caret className="ml-[3px]" />
        <T className="ml-[5px] gap-[3px]" icon={<Hand />} label="平移" />
        <Caret className="ml-[3px]" />
        <T className="ml-[3px] gap-1" icon={<Rotate />} label="屏幕旋转" />
        <Caret className="ml-[3px]" />
        <Sep className="ml-[5px]" />
        <T className="ml-[6px] gap-1" icon={<Paint />} label="构件图元显示设置" />
      </div>

      <div className="h-px" />

      {/* Workspace */}
      <div className="flex h-[569px]">
        <LeftNav />
        <div className="w-[5px] shrink-0" />
        <div className="flex flex-col h-full shrink-0">
          <ListPanel />
          <PropPanel />
        </div>
        <div className="w-[3px] shrink-0" />
        <div className="flex-1 flex flex-col min-w-0">
          <div className="w-[830px] h-[28px] pt-[1px] shrink-0 flex items-center whitespace-nowrap border-r border-b border-[#cfcfcf]">
            <Grip className="ml-[2px]" />
            <Select className="ml-[6px] w-[42px]" label="首层" />
            <Dropdown className="ml-[1px]" />
            <Select className="ml-[2px] w-[56px]" label="楼梯" />
            <Dropdown className="ml-[1px]" />
            <Select className="ml-[4px] w-[55px]" label="楼梯" />
            <Dropdown className="ml-[2px]" />
            <Select className="ml-[2px] w-[53px]" label="LT-1" />
            <Dropdown className="ml-[2px]" />
            <Sep className="ml-[5px]" />
            <div className="ml-[2px] w-[50px] h-[22px] flex items-center rounded-[3px] border border-[#666] bg-[#e4e4e4] gap-[2px] pl-[1px] text-[#1c1c1c] shrink-0">
              <PropIcon />
              <span>属性</span>
            </div>
            <div className="ml-[2px] w-[73px] h-[22px] flex items-center rounded-[3px] border border-[#666] bg-[#e4e4e4] gap-[2px] pl-[2px] text-[#1c1c1c] shrink-0">
              <ListIcon />
              <span>构件列表</span>
            </div>
            <T className="ml-[4px] gap-[3px]" icon={<Dropper />} label="拾取构件" />
            <Sep className="ml-[6px]" />
            <T className="ml-[11px] gap-1" icon={<TwoPoint />} label="两点" />
            <T className="ml-[7px] gap-[3px]" icon={<Parallel />} label="平行" />
            <T className="ml-[7px] gap-1" icon={<LengthDim />} label="长度标注" />
            <T className="ml-[7px] gap-[5px]" icon={<AlignDim />} label="对齐标注" />
            <T className="ml-[7px] gap-1" icon={<Measure />} label="测量距离" />
          </div>
          <div className="h-[28px] pt-[1px] shrink-0 flex whitespace-nowrap">
            <div className="w-[379px] flex items-center border-r border-[#cfcfcf]">
              <Grip className="ml-[2px]" />
              <T className="ml-[6px] gap-[5px]" icon={<Cursor />} label="选择" />
              <Caret className="ml-[4px]" />
              <Sep className="ml-[2px]" />
              <T className="ml-[7px] gap-[3px]" icon={<PointX />} label="点" />
              <T className="ml-[7px] gap-1" icon={<RotatePt />} label="旋转点" />
              <Sep className="ml-[6px]" />
              <T className="ml-[6px] gap-1" icon={<ComboNew />} label="新建组合构件" />
              <T className="ml-[8px] gap-[3px]" icon={<ComboCancel />} label="取消组合构件" />
            </div>
            <div className="ml-[53px] w-[132px] flex items-center border-r border-[#cfcfcf]">
              <Grip className="ml-[2px]" />
              <T className="ml-[7px] gap-[3px]" icon={<ModelPick />} label="从模型提取工程量" gray />
            </div>
          </div>
          <div className="flex-1 flex min-h-0">
            <VerticalStrip />
            <Canvas />
          </div>
        </div>
      </div>

      <Dialog />
      <Overlay />
    </div>
  );
}
